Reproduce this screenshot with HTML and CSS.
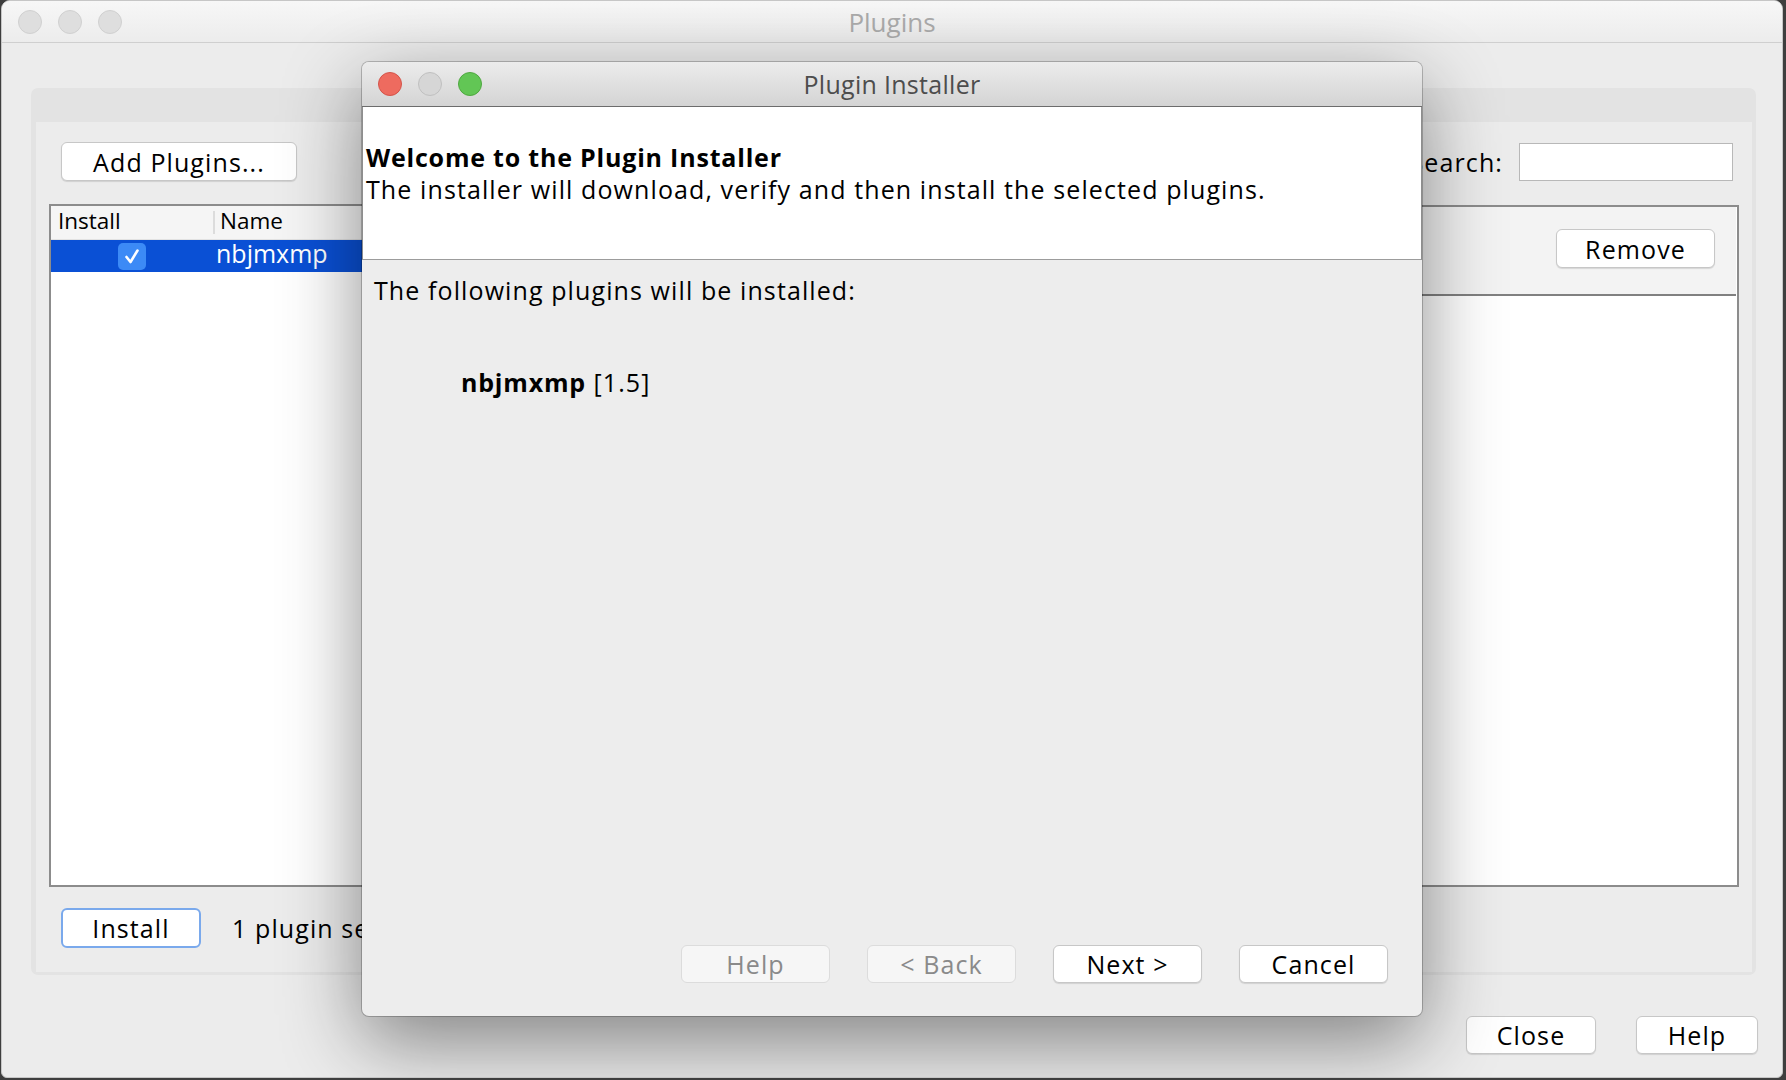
FILE: index.html
```html
<!DOCTYPE html>
<html lang="en">
<head>
<meta charset="utf-8">
<title>Plugins</title>
<link rel="stylesheet" href="styles.css">
</head>
<body>
<div class="window">
  <div class="titlebar">
    <div class="lights">
      <span class="light idle"></span><span class="light idle"></span><span class="light idle"></span>
    </div>
    <div class="wtitle">Plugins</div>
    <div></div>
  </div>

  <div class="tabpane">
    <div class="tabcontent">
      <div class="toolbar">
        <div class="btn add">Add Plugins...</div>
        <div class="search">
          <span class="slabel">Search:</span>
          <span class="sfield"></span>
        </div>
      </div>

      <div class="split">
        <div class="table">
          <div class="thead">
            <div class="c1 hcell">Install</div>
            <div class="c2 hcell">Name</div>
          </div>
          <div class="trow sel">
            <div class="c1 ccell">
              <span class="check"><svg width="28" height="27" viewBox="0 0 28 27"><path d="M8.5 14 L12.5 19 L19.5 7.5" fill="none" stroke="#fff" stroke-width="2.6" stroke-linecap="round" stroke-linejoin="round"/></svg></span>
            </div>
            <div class="c2 ncell">nbjmxmp</div>
          </div>
        </div>
        <div class="details">
          <div class="dtop"><div class="btn remove">Remove</div></div>
          <div class="dbody"></div>
        </div>
      </div>

      <div class="bottombar">
        <div class="btn install">Install</div>
        <span class="count">1 plugin selected</span>
      </div>
    </div>
  </div>

  <div class="footer">
    <div class="btn close">Close</div>
    <div class="btn fhelp">Help</div>
  </div>

  <div class="dialog">
    <div class="dtitlebar">
      <div class="lights">
        <span class="light red"></span><span class="light idle2"></span><span class="light green"></span>
      </div>
      <div class="dtitle">Plugin Installer</div>
      <div></div>
    </div>
    <div class="dheader">
      <div class="htitle">Welcome to the Plugin Installer</div>
      <div class="hsub">The installer will download, verify and then install the selected plugins.</div>
    </div>
    <div class="dcontent">
      <div class="intro">The following plugins will be installed:</div>
      <div class="plugin"><b>nbjmxmp</b> [1.5]</div>
      <div class="dbuttons">
        <div class="btn dbtn disabled">Help</div>
        <div class="btn dbtn disabled">&lt; Back</div>
        <div class="btn dbtn">Next &gt;</div>
        <div class="btn dbtn">Cancel</div>
      </div>
    </div>
  </div>
</div>
</body>
</html>
```

FILE: styles.css
```css
* { box-sizing: border-box; }

html, body {
  margin: 0;
  padding: 0;
}

body {
  width: 1786px;
  height: 1080px;
  overflow: hidden;
  background: #3e3e3e;
  font-family: "Open Sans", "Noto Sans", sans-serif;
  font-size: 25px;
  letter-spacing: 1.1px;
  color: #000;
}

b, .htitle { letter-spacing: 0.8px; }

.window {
  position: relative;
  margin-left: 1px;
  width: 1782px;
  height: 1078px;
  background: #ececec;
  border: 1px solid #c6c6c6;
  border-radius: 9px 9px 6px 6px;
  overflow: hidden;
}

/* ---------- title bars ---------- */
.titlebar {
  height: 42px;
  display: grid;
  grid-template-columns: 1fr auto 1fr;
  align-items: center;
  background: linear-gradient(#f7f7f7, #ececec);
  border-bottom: 1px solid #cfcfcf;
}

.lights {
  display: flex;
  gap: 16px;
  padding-left: 16px;
}

.light {
  width: 24px;
  height: 24px;
  border-radius: 50%;
  display: block;
}

.light.idle { background: #dedede; border: 1px solid #d0d0d0; }
.light.idle2 { background: #d6d6d6; border: 1px solid #c0c0c0; }
.light.red { background: #ee6b5f; border: 1px solid #d4544a; }
.light.green { background: #62c655; border: 1px solid #4fa840; }

.wtitle {
  font-size: 26px;
  letter-spacing: 0;
  color: #ababab;
  line-height: 39px;
  padding-top: 2px;
}

/* ---------- tab pane ---------- */
.tabpane {
  margin: 45px 0 0 29px;
  width: 1725px;
  height: 887px;
  background: #e3e3e3;
  border-radius: 7px;
  padding: 34px 4px 3px 5px;
}

.tabcontent {
  height: 850px;
  background: #ececec;
  display: flex;
  flex-direction: column;
}

.toolbar {
  display: flex;
  justify-content: space-between;
  align-items: flex-end;
  padding: 20px 19px 0 25px;
}

.btn {
  display: flex;
  align-items: center;
  justify-content: center;
  background: #fff;
  border: 1px solid #c7c7c7;
  border-radius: 6px;
  box-shadow: 0 1px 1px rgba(0, 0, 0, 0.12);
  line-height: 30px;
  white-space: nowrap;
}

.btn.add { width: 236px; height: 39px; }

.search {
  display: flex;
  align-items: center;
  gap: 16px;
  height: 38px;
}

.slabel { line-height: 38px; }

.sfield {
  display: block;
  width: 214px;
  height: 38px;
  background: #fff;
  border: 1px solid #b8b8b8;
}

.split {
  display: flex;
  gap: 10px;
  margin-top: 23px;
  padding: 0 13px;
  height: 683px;
}

.table {
  width: 640px;
  background: #fff;
  border: 2px solid #8c8c8c;
}

.thead {
  display: flex;
  height: 34px;
  background: #f5f5f5;
  border-bottom: 1px solid #e2e2e2;
}

.c1 { width: 164px; flex: none; }
.c2 { flex: 1; }

.hcell {
  font-size: 22.5px;
  letter-spacing: 0;
  line-height: 30.5px;
  position: relative;
}

.thead .c1 { padding-left: 7px; }
.thead .c1::after {
  content: "";
  position: absolute;
  right: 0;
  top: 5px;
  bottom: 5px;
  width: 2px;
  background: #dcdcdc;
}
.thead .c2 { padding-left: 5px; }

.trow {
  display: flex;
  height: 32px;
}

.trow.sel { background: #0a50d5; color: #fff; }

.ccell {
  display: flex;
  align-items: center;
  justify-content: center;
  padding-right: 2px;
}

.check {
  display: block;
  width: 28px;
  height: 27px;
  border-radius: 5px;
  background: #3c8af6;
}

.check svg { display: block; }

.ncell {
  line-height: 27px;
  letter-spacing: 0;
  padding-left: 1px;
}

.details {
  flex: 1;
  background: #fff;
  border: 2px solid #8c8c8c;
  margin-top: 1px;
}

.dtop {
  height: 89px;
  background: #f3f3f3;
  border-bottom: 2px solid #808080;
  display: flex;
  justify-content: flex-end;
  align-items: flex-start;
  padding: 22px 21px 0 0;
  margin-right: 1px;
}

.btn.remove { width: 159px; height: 39px; }

.bottombar {
  display: flex;
  align-items: center;
  gap: 31px;
  padding: 21px 0 0 25px;
}

.btn.install {
  width: 140px;
  height: 40px;
  border: 2px solid #7aa9ec;
  box-shadow: none;
}

.count { line-height: 40px; }

/* ---------- footer ---------- */
.footer {
  display: flex;
  justify-content: flex-end;
  gap: 40px;
  margin-top: 41px;
  padding-right: 24px;
}

.btn.close { width: 130px; height: 38px; }
.btn.fhelp { width: 122px; height: 38px; }

/* ---------- dialog (overlay window) ---------- */
.dialog {
  position: absolute;
  left: 360px;
  top: 61px;
  width: 1060px;
  height: 954px;
  background: #ededed;
  border-radius: 7px;
  overflow: hidden;
  display: flex;
  flex-direction: column;
  box-shadow: 0 0 0 1px rgba(0, 0, 0, 0.22), 0 26px 80px rgba(0, 0, 0, 0.45);
}

.dtitlebar {
  height: 45px;
  flex: none;
  display: grid;
  grid-template-columns: 1fr auto 1fr;
  align-items: center;
  background: linear-gradient(#ececec, #d4d4d4);
  border-bottom: 1px solid #6c6c6c;
}

.dtitle {
  color: #4d4d4d;
  letter-spacing: 0.3px;
  line-height: 44px;
}

.dheader {
  height: 153px;
  flex: none;
  background: #fff;
  border-bottom: 1px solid #9c9c9c;
  border-left: 1px solid #8e8e8e;
  border-right: 1px solid #8e8e8e;
  padding: 34px 0 0 3px;
  line-height: 32px;
}

.htitle { font-weight: 700; }

.dcontent {
  flex: 1;
  display: flex;
  flex-direction: column;
  padding: 14px 34px 33px 12px;
  line-height: 32px;
}

.plugin {
  margin: 60px 0 0 87px;
}

.plugin b { font-weight: 700; }

.dbuttons {
  margin-top: auto;
  display: flex;
  justify-content: flex-end;
  gap: 37px;
}

.btn.dbtn { width: 149px; height: 38px; }

.btn.disabled {
  background: #f6f6f6;
  border-color: #dcdcdc;
  color: #8a8a8a;
  box-shadow: none;
}
```
